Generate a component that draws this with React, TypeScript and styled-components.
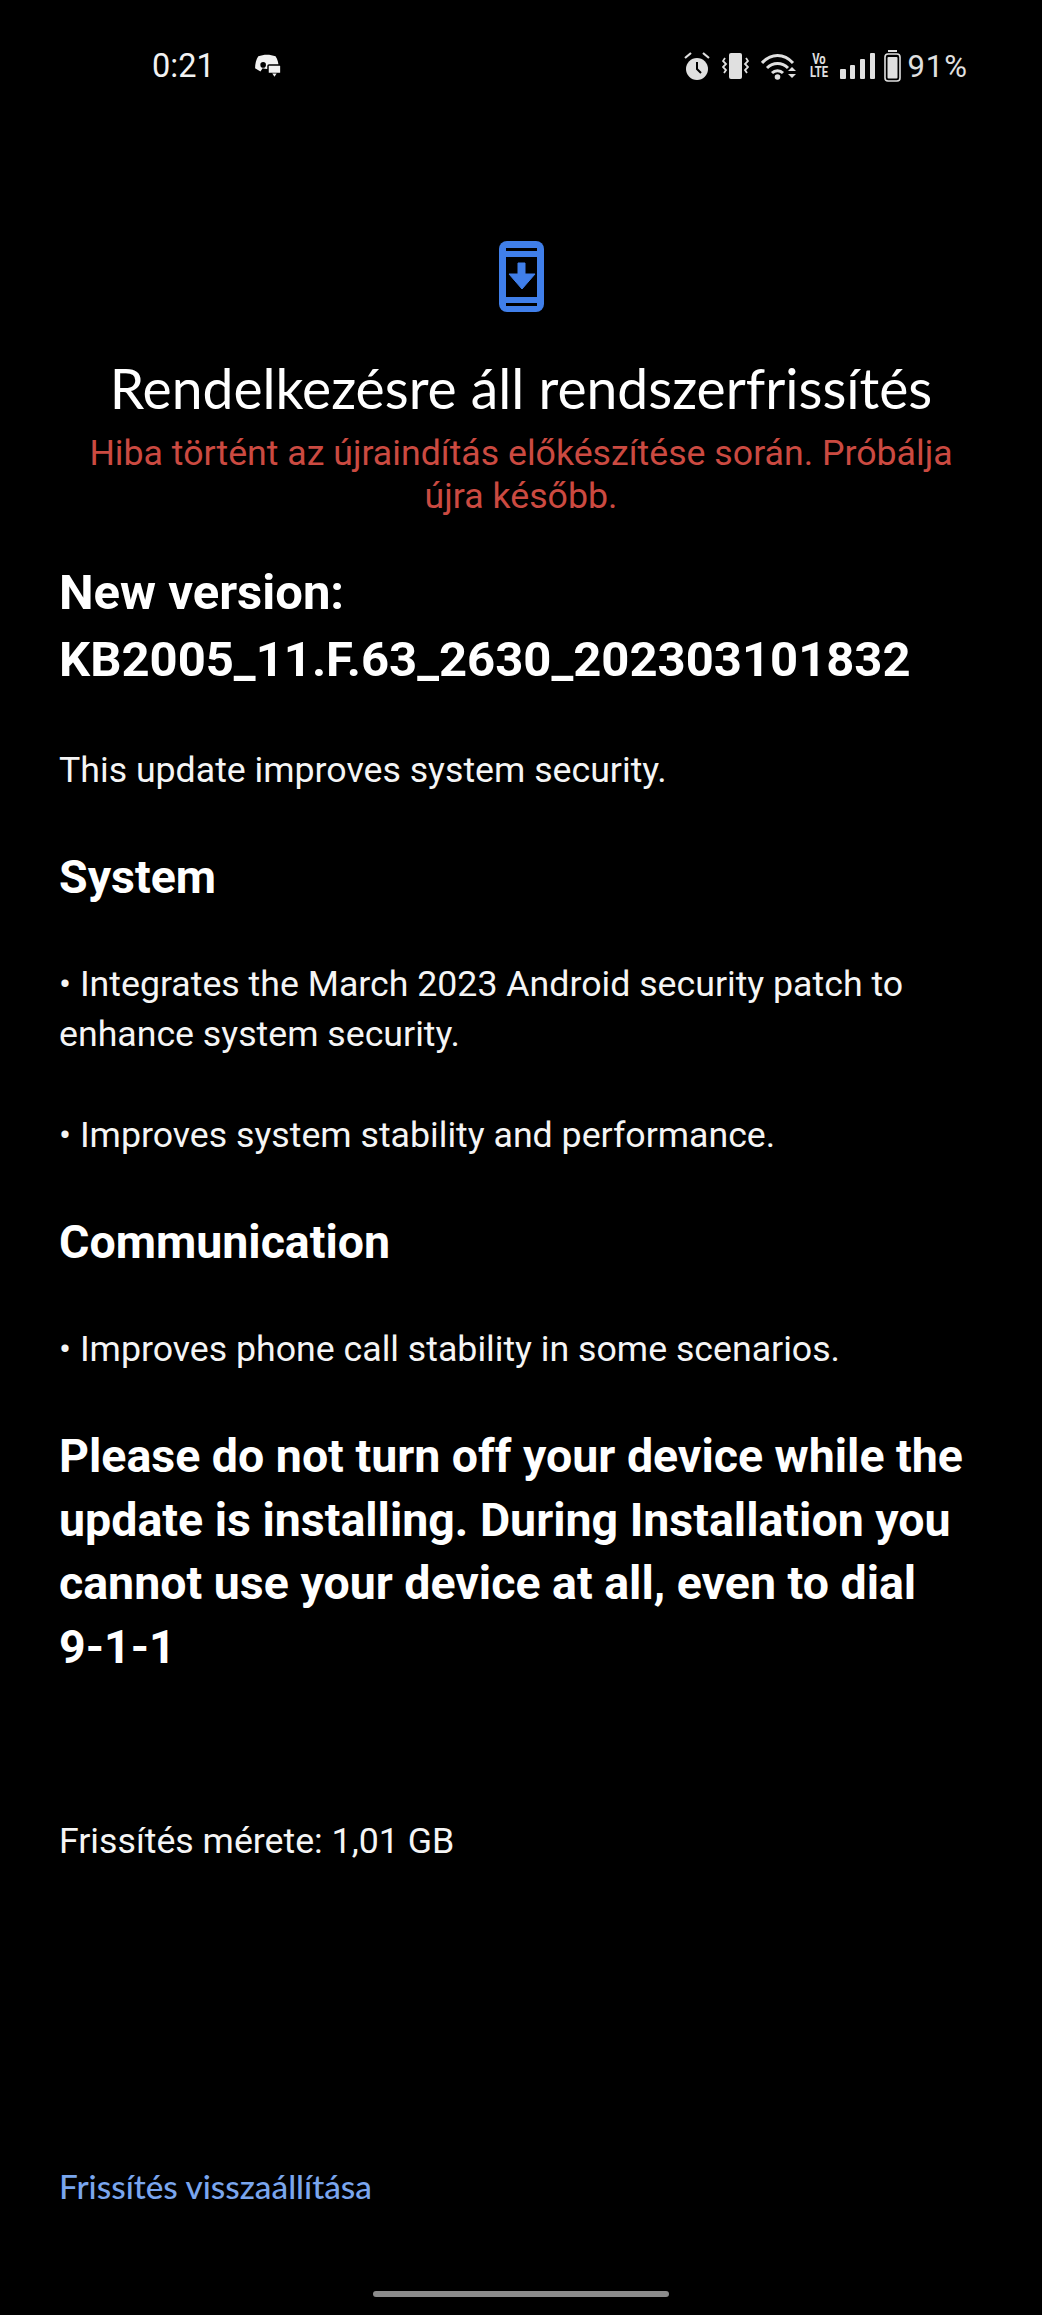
import React from 'react'
import styled, { createGlobalStyle } from 'styled-components'

const Global = createGlobalStyle`
  html, body { margin: 0; padding: 0; background: #000; }
  * { box-sizing: border-box; }
`

const Screen = styled.div`
  width: 1042px;
  height: 2315px;
  background: #000;
  color: #fff;
  font-family: Roboto, "Liberation Sans", sans-serif;
  display: flex;
  flex-direction: column;
  overflow: hidden;
`

const StatusBar = styled.div`
  height: 50px;
  margin-top: 41px;
  padding: 0 74px 0 152px;
  display: flex;
  align-items: center;
  justify-content: space-between;
`

const StatusGroup = styled.div<{ $gap: number }>`
  display: flex;
  align-items: center;
  gap: ${({ $gap }) => $gap}px;
`

const Clock = styled.span`
  font-size: 32.5px;
  color: #f2f2f2;
`

const Percent = styled.span`
  font-size: 31px;
  color: #e0e0e0;
  letter-spacing: 1px;
  margin-left: -6px;
`

const Header = styled.header`
  margin-top: 150px;
  padding: 0 59px;
  display: flex;
  flex-direction: column;
  align-items: center;
  text-align: center;
`

const Title = styled.h1`
  margin: 45px 0 0;
  font-family: Lato, Roboto, sans-serif;
  font-weight: 400;
  font-size: 55.2px;
  line-height: 62px;
`

const ErrorText = styled.p`
  margin: 13px 0 0;
  font-size: 35.7px;
  line-height: 43px;
  color: #cb4a41;
`

const Content = styled.main`
  padding: 0 59px;
  margin-top: 41px;
`

const Heading = styled.h2`
  margin: 0;
  font-size: 49px;
  line-height: 67px;
  font-weight: 700;
`

const SubHeading = styled.h3<{ $top: number }>`
  margin: ${({ $top }) => $top}px 0 0;
  font-size: 46.5px;
  line-height: 56px;
  font-weight: 700;
`

const Body = styled.p<{ $top: number }>`
  margin: ${({ $top }) => $top}px 0 0;
  font-size: 35.7px;
  line-height: 50px;
  color: #f5f5f5;
`

const Warning = styled.h2`
  margin: 51px 0 0;
  font-size: 46.5px;
  line-height: 63.5px;
  font-weight: 700;
`

const NoBreak = styled.span`
  white-space: nowrap;
`

const ResetLink = styled.a`
  margin: auto 0 0 59px;
  font-family: Lato, Roboto, sans-serif;
  font-weight: 500;
  font-size: 33.3px;
  line-height: 40px;
  color: #7aa6ee;
`

const HomeBar = styled.div`
  width: 296px;
  height: 6px;
  border-radius: 3px;
  background: #8c8c8c;
  margin: 85px auto 18px;
`

const VoLte = styled.span`
  flex: none;
  width: 24px;
  margin: 0 -2.5px;
  text-align: center;
  font-weight: 700;
  font-size: 14px;
  line-height: 13px;
  color: #e0e0e0;
  transform: scaleX(0.8);
`

const BatteryWrap = styled.span`
  display: flex;
  margin-left: -3px;
`

const Alarm = () => (
  <svg width="26" height="28" viewBox="0 0 26 28" fill="none">
    <circle cx="13" cy="17" r="11" fill="#e0e0e0" />
    <path d="M13 10v7l4 4" stroke="#000" strokeWidth="2" />
    <path d="M1 6l6-5M25 6l-6-5" stroke="#e0e0e0" strokeWidth="2.2" />
  </svg>
)

const Vibrate = () => (
  <svg width="27" height="26" viewBox="0 0 27 26" fill="none">
    <rect x="7" y="0" width="13" height="26" rx="2" fill="#e0e0e0" />
    <path d="M3 5l-2 3 3 3-3 3 3 3-2 3M24 5l2 3-3 3 3 3-3 3 2 3" stroke="#e0e0e0" strokeWidth="1.8" />
  </svg>
)

const Wifi = () => (
  <svg width="36" height="28" viewBox="0 0 36 28" fill="none">
    <path d="M1 11c9-10 22-10 31 0M6 16c6-6 15-6 21 0M11 21c3-3 8-3 11 0" stroke="#e0e0e0" strokeWidth="3" />
    <circle cx="16.5" cy="25" r="2.8" fill="#e0e0e0" />
    <path d="M27 19l4-4 4 4zM27 22l4 4 4-4z" fill="#e0e0e0" />
  </svg>
)

const Signal = () => (
  <svg width="35" height="26" viewBox="0 0 35 26" fill="#e0e0e0">
    <rect x="0" y="16" width="6" height="10" rx="1" />
    <rect x="10" y="12" width="5" height="14" rx="1" />
    <rect x="20" y="6" width="5" height="20" rx="1" />
    <rect x="30" y="0" width="5" height="26" rx="1" />
  </svg>
)

const Battery = () => (
  <svg width="17" height="32" viewBox="0 0 17 32" fill="none">
    <rect x="4" y="0" width="9" height="2" fill="#e0e0e0" />
    <rect x="1" y="4" width="15" height="27" rx="3" stroke="#e0e0e0" strokeWidth="1.6" />
    <rect x="3.5" y="7" width="10" height="21.5" rx="1" fill="#e0e0e0" />
  </svg>
)

const Discord = () => (
  <svg width="28" height="24" viewBox="0 0 26 22">
    <path d="M4 2c5-2 11-2 16 0 2 3 3 7 3 11l-5 3-2-3c-3 1-5 1-8 0l-2 3-5-3c0-4 1-8 3-11z" fill="#f2f2f2" />
    <circle cx="8.5" cy="10" r="2.6" fill="#000" />
    <rect x="13" y="10" width="12" height="8" rx="1" fill="#f2f2f2" stroke="#000" strokeWidth="1.4" />
    <path d="M17 18h4l-2 3z" fill="#f2f2f2" />
  </svg>
)

const UpdateIcon = () => (
  <svg width="45" height="71" viewBox="0 0 45 71">
    <rect width="45" height="71" rx="8" fill="#407fea" />
    <path d="M7 7h31v3H7zM7 16h31v40H7zM7 62h31v3H7z" fill="#000" />
    <path d="M19 22h7v11h10L23 48 10 33h9z" fill="#407fea" stroke="#407fea" strokeLinejoin="round" />
  </svg>
)

export default function App() {
  return (
    <Screen>
      <Global />
      <StatusBar>
        <StatusGroup $gap={39}>
          <Clock>0:21</Clock>
          <Discord />
        </StatusGroup>
        <StatusGroup $gap={12}>
          <Alarm />
          <Vibrate />
          <Wifi />
          <VoLte>Vo LTE</VoLte>
          <Signal />
          <BatteryWrap>
            <Battery />
          </BatteryWrap>
          <Percent>91%</Percent>
        </StatusGroup>
      </StatusBar>

      <Header>
        <UpdateIcon />
        <Title>Rendelkezésre áll rendszerfrissítés</Title>
        <ErrorText>Hiba történt az újraindítás előkészítése során. Próbálja újra később.</ErrorText>
      </Header>

      <Content>
        <Heading>
          New version:
          <br />
          KB2005_11.F.63_2630_202303101832
        </Heading>
        <Body $top={52}>This update improves system security.</Body>
        <SubHeading $top={54}>System</SubHeading>
        <Body $top={54}>• Integrates the March 2023 Android security patch to enhance system security.</Body>
        <Body $top={51}>• Improves system stability and performance.</Body>
        <SubHeading $top={54}>Communication</SubHeading>
        <Body $top={54}>• Improves phone call stability in some scenarios.</Body>
        <Warning>
          Please do not turn off your device while the update is installing. During Installation you cannot use your
          device at all, even to dial <NoBreak>9-1-1</NoBreak>
        </Warning>
        <Body $top={137}>Frissítés mérete: 1,01 GB</Body>
      </Content>

      <ResetLink>Frissítés visszaállítása</ResetLink>
      <HomeBar />
    </Screen>
  )
}
